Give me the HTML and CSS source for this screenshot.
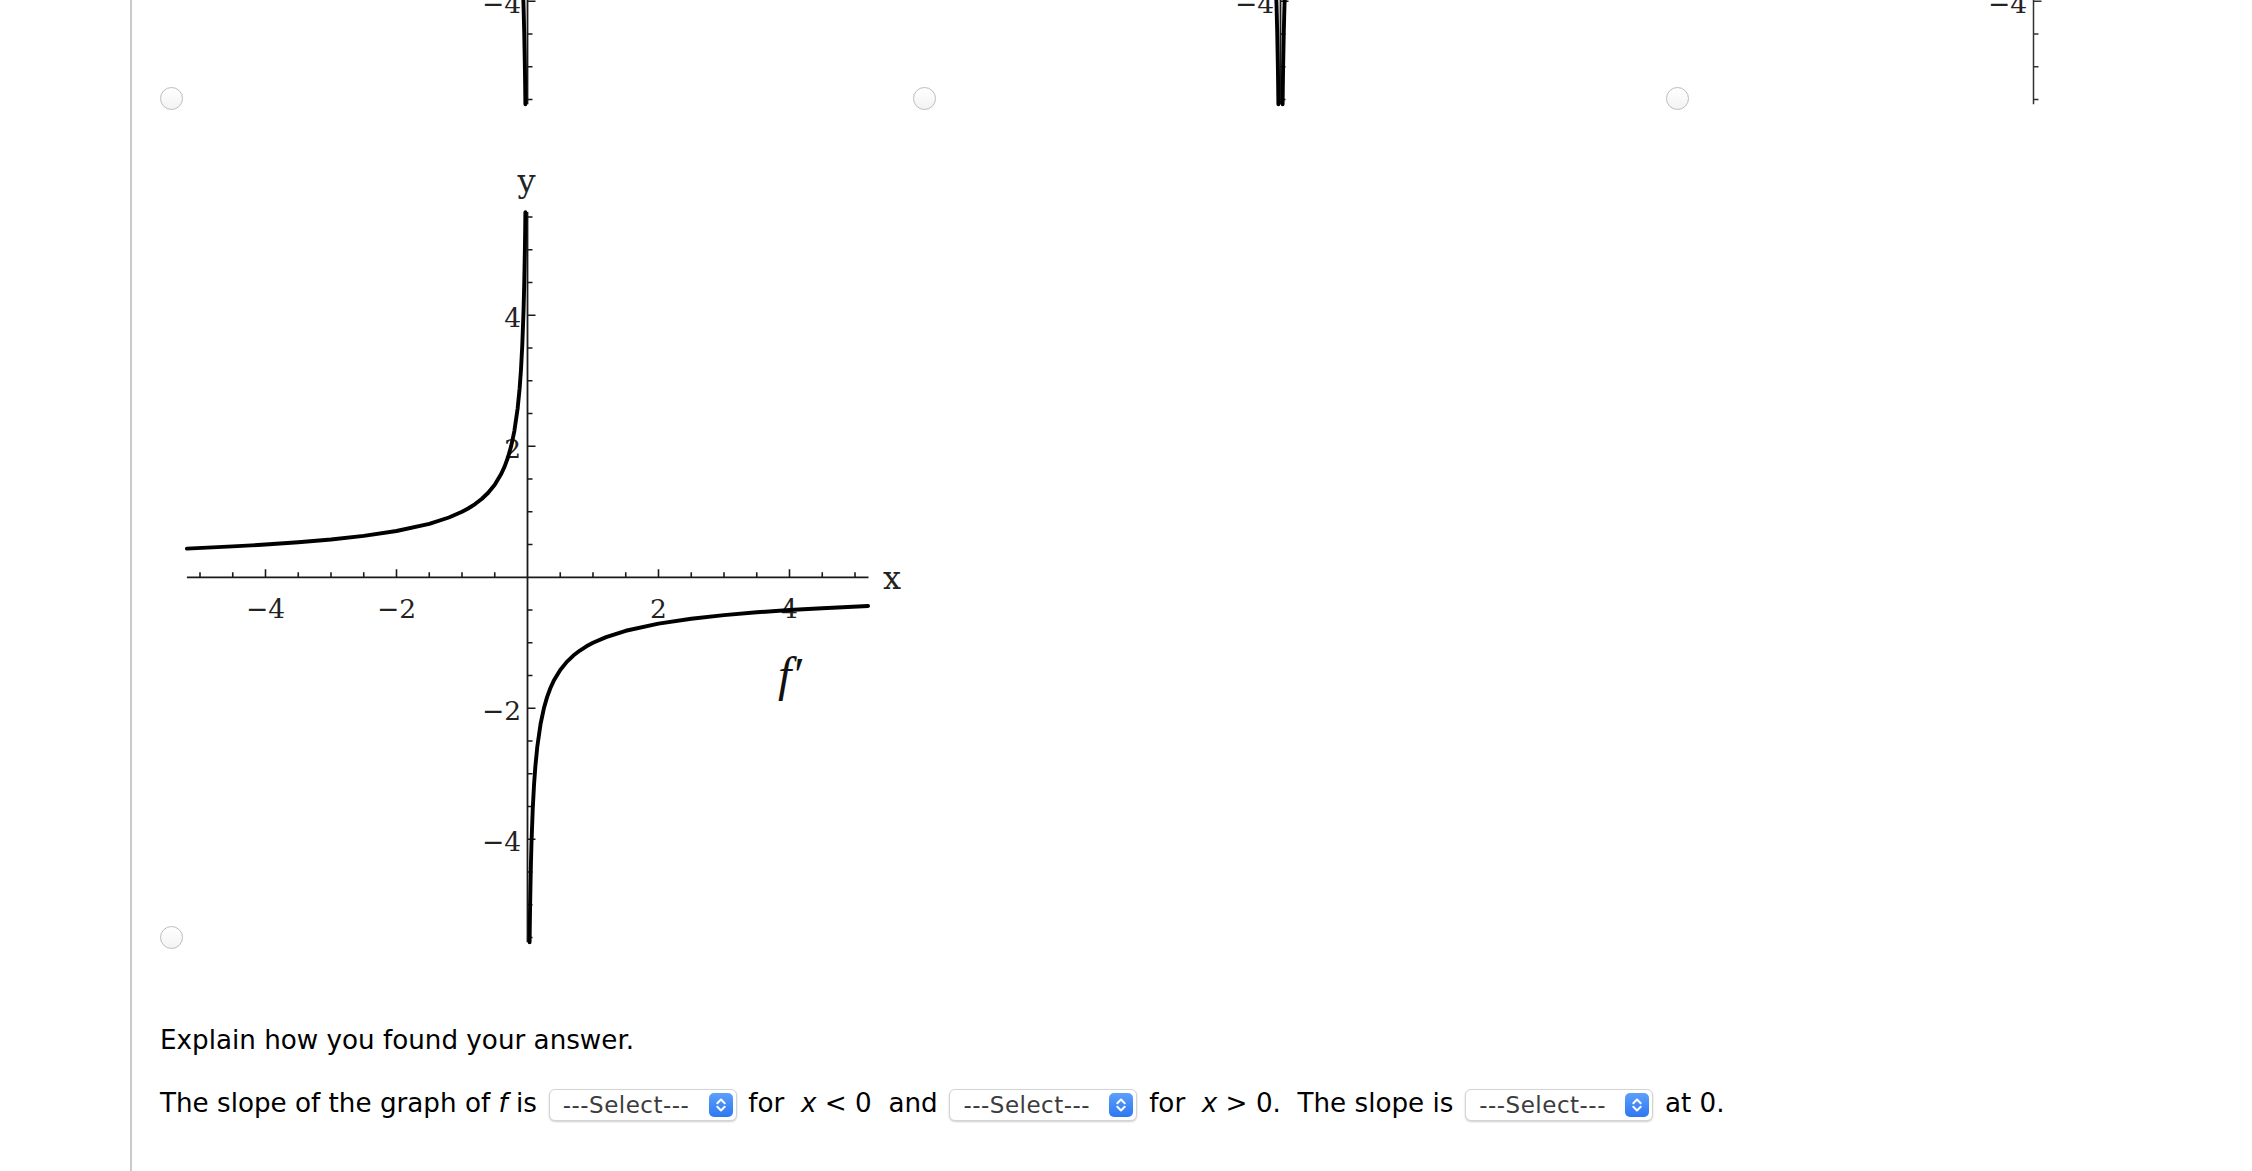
FILE: index.html
```html
<!DOCTYPE html>
<html lang="en">
<head>
<meta charset="utf-8">
<title>Graph question</title>
<link rel="stylesheet" href="styles.css">
</head>
<body>
<div class="page">
  <div class="choices-top">
    <label class="choice">
      <input type="radio" name="graph" class="radio">
      <svg class="graph" viewBox="0 678 730 112" width="730" height="112">
        <g transform="translate(343.5 417.3)">
          <path class="axis" d="M0 -365.3V365"/>
          <path class="ticks" d="M0 163.75h5M0 196.5h5M0 229.25h5M0 294.75h5M0 327.5h5M0 360.25h5M0 131h8M0 262h8"/>
          <text class="tick" x="-6.5" y="274" text-anchor="end">−4</text>
          <polyline class="curve" points="-5.24,231.58 -3.93,267.4 -3.28,292.92 -2.62,327.5 -2.29,350.1 -2.11,365"/>
        </g>
      </svg>
    </label>
    <label class="choice">
      <input type="radio" name="graph" class="radio">
      <svg class="graph" viewBox="0 678 730 112" width="730" height="112">
        <g transform="translate(343.5 417.3)">
          <path class="axis" d="M0 -365.3V365"/>
          <path class="ticks" d="M0 163.75h5M0 196.5h5M0 229.25h5M0 294.75h5M0 327.5h5M0 360.25h5M0 131h8M0 262h8"/>
          <text class="tick" x="-6.5" y="274" text-anchor="end">−4</text>
          <polyline class="curve" points="-5.24,231.58 -3.93,267.4 -3.28,292.92 -2.62,327.5 -2.29,350.1 -2.11,365"/>
          <polyline class="curve" points="5.24,231.58 3.93,267.4 3.28,292.92 2.62,327.5 2.29,350.1 2.11,365"/>
        </g>
      </svg>
    </label>
    <label class="choice">
      <input type="radio" name="graph" class="radio">
      <svg class="graph" viewBox="0 678 730 112" width="730" height="112">
        <g transform="translate(343.5 417.3)">
          <path class="axis thin" d="M0 -365.3V365"/>
          <path class="ticks thin" d="M0 163.75h5M0 196.5h5M0 229.25h5M0 294.75h5M0 327.5h5M0 360.25h5M0 131h8M0 262h8"/>
          <text class="tick" x="-6.5" y="274" text-anchor="end">−4</text>
        </g>
      </svg>
    </label>
  </div>

  <div class="choices-main">
    <label class="choice">
      <input type="radio" name="graph" class="radio">
      <svg class="graph" viewBox="0 0 730 790" width="730" height="790">
        <g transform="translate(343.5 417.3)">
          <path class="axis" d="M-340.6 0H341M0 -365.3V365"/>
          <path class="ticks" d="M32.75 0v-5M65.5 0v-5M98.25 0v-5M163.75 0v-5M196.5 0v-5M229.25 0v-5M294.75 0v-5M327.5 0v-5M-32.75 0v-5M-65.5 0v-5M-98.25 0v-5M-163.75 0v-5M-196.5 0v-5M-229.25 0v-5M-294.75 0v-5M-327.5 0v-5M131 0v-8M262 0v-8M-131 0v-8M-262 0v-8M0 32.75h5M0 65.5h5M0 98.25h5M0 163.75h5M0 196.5h5M0 229.25h5M0 294.75h5M0 327.5h5M0 360.25h5M0 -32.75h5M0 -65.5h5M0 -98.25h5M0 -163.75h5M0 -196.5h5M0 -229.25h5M0 -294.75h5M0 -327.5h5M0 -360.25h5M0 131h8M0 262h8M0 -131h8M0 -262h8"/>
          <text class="tick" x="-262" y="40.4" text-anchor="middle">−4</text>
          <text class="tick" x="-131" y="40.4" text-anchor="middle">−2</text>
          <text class="tick" x="131" y="40.4" text-anchor="middle">2</text>
          <text class="tick" x="262" y="40.4" text-anchor="middle">4</text>
          <text class="tick" x="-6.5" y="-250" text-anchor="end">4</text>
          <text class="tick" x="-6.5" y="-119" text-anchor="end">2</text>
          <text class="tick" x="-6.5" y="143" text-anchor="end">−2</text>
          <text class="tick" x="-6.5" y="274" text-anchor="end">−4</text>
          <text class="axis-label" x="-1" y="-385.3" text-anchor="middle">y</text>
          <text class="axis-label" x="355.5" y="11.7">x</text>
          <text class="fn-label" x="250.5" y="113.7">f′</text>
          <polyline class="curve" points="-340.6,-28.72 -294.75,-30.88 -262,-32.75 -229.25,-35.01 -196.5,-37.82 -163.75,-41.43 -131,-46.32 -98.25,-53.48 -78.6,-59.8 -65.5,-65.5 -58.95,-69.04 -52.4,-73.23 -45.85,-78.27 -39.3,-84.56 -32.75,-92.63 -26.2,-103.56 -22.93,-110.7 -19.65,-119.58 -16.38,-131 -13.1,-146.46 -9.83,-169.12 -7.86,-189.09 -6.55,-207.13 -5.24,-231.58 -3.93,-267.4 -3.28,-292.92 -2.62,-327.5 -2.29,-350.1 -2.11,-365"/>
          <polyline class="curve" points="340.6,28.72 294.75,30.88 262,32.75 229.25,35.01 196.5,37.82 163.75,41.43 131,46.32 98.25,53.48 78.6,59.8 65.5,65.5 58.95,69.04 52.4,73.23 45.85,78.27 39.3,84.56 32.75,92.63 26.2,103.56 22.93,110.7 19.65,119.58 16.38,131 13.1,146.46 9.83,169.12 7.86,189.09 6.55,207.13 5.24,231.58 3.93,267.4 3.28,292.92 2.62,327.5 2.29,350.1 2.11,365"/>
        </g>
      </svg>
    </label>
  </div>

  <p class="explain">Explain how you found your answer.</p>

  <p class="answer">The slope of the graph of <i>f</i> is <span class="sel"><select><option>---Select---</option><option>positive</option><option>negative</option><option>zero</option><option>undefined</option></select><span class="stepper"><svg width="24" height="24" viewBox="0 0 24 24"><path d="M8.3 10.2 12 6.5 15.7 10.2M8.3 13.8 12 17.5 15.7 13.8"/></svg></span></span> for&nbsp; <i>x</i> &lt; 0&nbsp; and <span class="sel"><select><option>---Select---</option><option>positive</option><option>negative</option><option>zero</option><option>undefined</option></select><span class="stepper"><svg width="24" height="24" viewBox="0 0 24 24"><path d="M8.3 10.2 12 6.5 15.7 10.2M8.3 13.8 12 17.5 15.7 13.8"/></svg></span></span> for&nbsp; <i>x</i> &gt; 0.&nbsp; The slope is <span class="sel"><select><option>---Select---</option><option>positive</option><option>negative</option><option>zero</option><option>undefined</option></select><span class="stepper"><svg width="24" height="24" viewBox="0 0 24 24"><path d="M8.3 10.2 12 6.5 15.7 10.2M8.3 13.8 12 17.5 15.7 13.8"/></svg></span></span> at 0.</p>
</div>
</body>
</html>
```

FILE: styles.css
```css
html, body {
  margin: 0;
  padding: 0;
  background: #fff;
}

body {
  font-family: "DejaVu Sans", Verdana, sans-serif;
  color: #000;
}

.page {
  margin-left: 130px;
  border-left: 2px solid #cacaca;
  padding-left: 28px;
  min-height: 100vh;
  box-sizing: border-box;
  overflow: hidden;
}

.choices-top {
  display: grid;
  grid-template-columns: repeat(3, 753px);
  height: 112px;
}

.choices-main {
  display: flex;
  margin-top: 48px;
}

.choice {
  display: flex;
  align-items: flex-end;
}

.radio {
  -webkit-appearance: none;
  appearance: none;
  flex: none;
  width: 23px;
  height: 23px;
  margin: 0 1px 2px 0;
  border: 1px solid #bcbcbc;
  border-radius: 50%;
  background: linear-gradient(#ffffff, #f3f3f3);
  box-sizing: border-box;
}

.choices-main .radio {
  margin-bottom: 1px;
}

.graph {
  display: block;
  flex: none;
  overflow: hidden;
}

.axis {
  fill: none;
  stroke: #1a1a1a;
  stroke-width: 1.8;
}

.ticks {
  fill: none;
  stroke: #1a1a1a;
  stroke-width: 1.6;
}

.axis.thin,
.ticks.thin {
  stroke: #333;
  stroke-width: 1.5;
}

.curve {
  fill: none;
  stroke: #000;
  stroke-width: 3.9;
  stroke-linejoin: round;
  stroke-linecap: round;
}

.tick {
  font-family: "DejaVu Serif", serif;
  font-size: 26.5px;
  fill: #222;
}

.axis-label {
  font-family: "DejaVu Serif", serif;
  font-size: 32px;
  fill: #222;
}

.fn-label {
  font-family: "Liberation Serif", serif;
  font-style: italic;
  font-size: 48px;
  fill: #111;
}

.explain {
  margin: 75px 0 0;
  font-size: 26.2px;
  line-height: 31.2px;
}

.answer {
  margin: 30px 0 0;
  font-size: 26.2px;
  line-height: 34px;
}

.sel {
  display: inline-block;
  position: relative;
  width: 188px;
  height: 32px;
  margin: 0 3.4px;
  vertical-align: middle;
}

.sel select {
  -webkit-appearance: none;
  appearance: none;
  display: block;
  width: 100%;
  height: 100%;
  margin: 0;
  padding: 0 0 0 13px;
  box-sizing: border-box;
  border: 1px solid #d4d4d4;
  border-radius: 6px;
  background: #fff;
  box-shadow: 0 1px 2px rgba(0, 0, 0, 0.2);
  font-family: "DejaVu Sans", Verdana, sans-serif;
  font-size: 23px;
  letter-spacing: 0.5px;
  color: #3c3c3c;
}

.stepper {
  position: absolute;
  right: 4px;
  top: 4px;
  width: 24px;
  height: 24px;
  border-radius: 5px;
  background: linear-gradient(#5ca0fb, #2e77f1);
  pointer-events: none;
}

.stepper svg {
  display: block;
}

.stepper path {
  fill: none;
  stroke: #fff;
  stroke-width: 2;
  stroke-linecap: round;
  stroke-linejoin: round;
}
```
